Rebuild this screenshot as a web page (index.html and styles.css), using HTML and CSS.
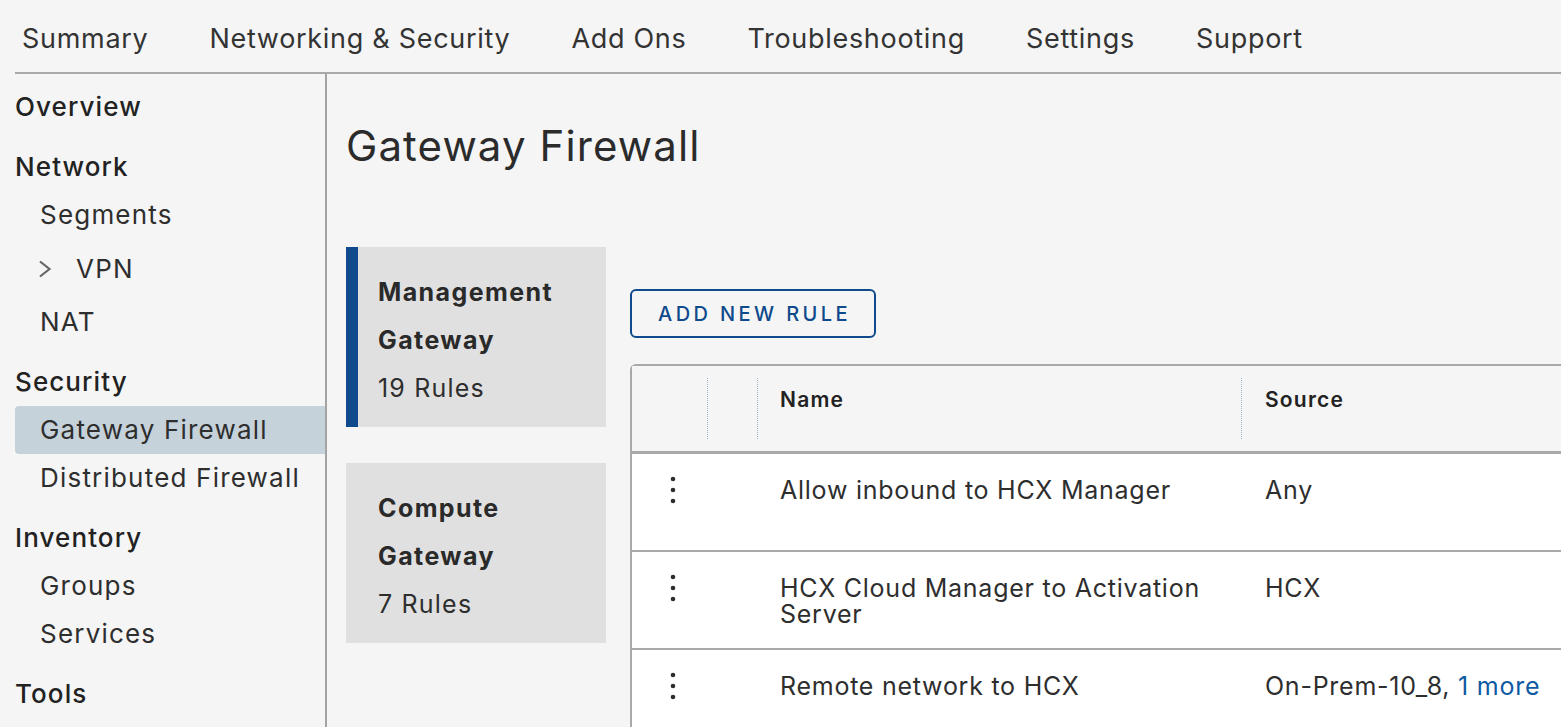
FILE: index.html
```html
<!DOCTYPE html>
<html lang="en">
<head>
<meta charset="utf-8">
<title>Gateway Firewall</title>
<link rel="stylesheet" href="styles.css">
</head>
<body>
<header class="topnav">
  <a class="topnav-item">Summary</a>
  <a class="topnav-item">Networking &amp; Security</a>
  <a class="topnav-item">Add Ons</a>
  <a class="topnav-item">Troubleshooting</a>
  <a class="topnav-item">Settings</a>
  <a class="topnav-item">Support</a>
</header>
<div class="layout">
  <nav class="sidebar">
    <div class="nav-head first">Overview</div>
    <div class="nav-head">Network</div>
    <div class="nav-item">Segments</div>
    <div class="nav-item nav-group">
      <svg class="chev" width="14" height="18" viewBox="0 0 14 18"><path d="M2 1.5 L11.5 9 L2 16.5" fill="none" stroke="#666" stroke-width="2.2"/></svg>
      <span>VPN</span>
    </div>
    <div class="nav-item">NAT</div>
    <div class="nav-head">Security</div>
    <div class="nav-item active">Gateway Firewall</div>
    <div class="nav-item">Distributed Firewall</div>
    <div class="nav-head">Inventory</div>
    <div class="nav-item">Groups</div>
    <div class="nav-item">Services</div>
    <div class="nav-head">Tools</div>
  </nav>
  <main class="main">
    <h1 class="title">Gateway Firewall</h1>
    <div class="content">
      <div class="gateways">
        <div class="gw-card selected">
          <div class="gw-name">Management</div>
          <div class="gw-name">Gateway</div>
          <div class="gw-count">19 Rules</div>
        </div>
        <div class="gw-card">
          <div class="gw-name">Compute</div>
          <div class="gw-name">Gateway</div>
          <div class="gw-count">7 Rules</div>
        </div>
      </div>
      <div class="rules">
        <button class="btn-outline">ADD NEW RULE</button>
        <div class="grid">
          <div class="grid-row grid-head">
            <div class="cell c-act"></div>
            <div class="cell c-sel sep"></div>
            <div class="cell c-name sep"><span>Name</span></div>
            <div class="cell c-src sep"><span>Source</span></div>
          </div>
          <div class="grid-row">
            <div class="cell c-act"><svg class="kebab" width="6" height="28" viewBox="0 0 6 28"><circle cx="3" cy="3" r="2.3"/><circle cx="3" cy="14" r="2.3"/><circle cx="3" cy="25" r="2.3"/></svg></div>
            <div class="cell c-sel"></div>
            <div class="cell c-name">Allow inbound to HCX Manager</div>
            <div class="cell c-src">Any</div>
          </div>
          <div class="grid-row">
            <div class="cell c-act"><svg class="kebab" width="6" height="28" viewBox="0 0 6 28"><circle cx="3" cy="3" r="2.3"/><circle cx="3" cy="14" r="2.3"/><circle cx="3" cy="25" r="2.3"/></svg></div>
            <div class="cell c-sel"></div>
            <div class="cell c-name">HCX Cloud Manager to Activation Server</div>
            <div class="cell c-src">HCX</div>
          </div>
          <div class="grid-row">
            <div class="cell c-act"><svg class="kebab" width="6" height="28" viewBox="0 0 6 28"><circle cx="3" cy="3" r="2.3"/><circle cx="3" cy="14" r="2.3"/><circle cx="3" cy="25" r="2.3"/></svg></div>
            <div class="cell c-sel"></div>
            <div class="cell c-name">Remote network to HCX</div>
            <div class="cell c-src">On-Prem-10_8, <a class="more">1 more</a></div>
          </div>
        </div>
      </div>
    </div>
  </main>
</div>
</body>
</html>
```

FILE: styles.css
```css
* { box-sizing: border-box; }
html, body { height: 100%; }
body {
  margin: 0;
  background: #f5f5f5;
  color: #2e2e2e;
  font-family: Inter, "Open Sans", sans-serif;
  overflow: hidden;
}

.topnav {
  display: flex;
  align-items: center;
  gap: 61px;
  height: 74px;
  margin-left: 15px;
  padding-left: 7px;
  padding-top: 4px;
  border-bottom: 2px solid #a9a9a9;
}
.topnav-item {
  font-size: 27px;
  color: #333;
  letter-spacing: 0.7px;
}

.layout {
  display: flex;
  height: calc(100% - 74px);
}
.sidebar {
  width: 312px;
  margin-left: 15px;
  padding-top: 9px;
  border-right: 2px solid #a3a3a3;
  flex-shrink: 0;
}
.nav-head {
  height: 48px;
  line-height: 48px;
  margin-top: 12px;
  padding-left: 0;
  font-size: 26px;
  font-weight: 500;
  color: #222;
  letter-spacing: 1.1px;
}
.nav-head.first { margin-top: 0; }
.nav-item {
  height: 48px;
  line-height: 48px;
  padding-left: 25px;
  font-size: 26px;
  color: #2e2e2e;
  letter-spacing: 1.2px;
}
.nav-group {
  height: 59px;
  line-height: 59px;
  display: flex;
  align-items: center;
  padding-left: 23px;
  gap: 24px;
}
.chev { flex-shrink: 0; }
.nav-item.active {
  background: #c6d2da;
  border-radius: 4px 0 0 4px;
}

.main {
  flex: 1;
  padding-left: 19px;
  min-width: 0;
}
.title {
  margin: 0;
  padding-top: 46px;
  height: 173px;
  font-size: 42px;
  font-weight: 400;
  line-height: 52px;
  color: #2b2b2b;
  letter-spacing: 1.1px;
}
.content {
  display: flex;
  gap: 24px;
}
.gateways {
  display: flex;
  flex-direction: column;
  gap: 36px;
  width: 260px;
  flex-shrink: 0;
}
.gw-card {
  height: 180px;
  background: #e0e0e0;
  border-left: 12px solid #e0e0e0;
  padding: 21px 0 15px 20px;
}
.gw-card.selected { border-left-color: #0f4a8c; }
.gw-name, .gw-count {
  height: 48px;
  line-height: 48px;
  font-size: 25px;
}
.gw-name { font-weight: 700; color: #2a2a2a; letter-spacing: 1.4px; }
.gw-count { color: #2e2e2e; letter-spacing: 1.2px; }

.rules {
  flex: 1;
  padding-top: 42px;
  min-width: 0;
}
.btn-outline {
  display: block;
  width: 246px;
  height: 49px;
  border: 2px solid #0f4a8c;
  border-radius: 6px;
  background: transparent;
  color: #0f4a8c;
  font-family: inherit;
  font-size: 20px;
  font-weight: 500;
  letter-spacing: 3.4px;
  padding: 0 0 0 3px;
}
.grid {
  margin-top: 26px;
  border-left: 2px solid #a9a9a9;
  border-top: 2px solid #a9a9a9;
  border-top-left-radius: 6px;
  width: 1100px;
}
.grid-row {
  display: flex;
  background: #fff;
  border-bottom: 2px solid #a9a9a9;
  height: 98px;
}
.grid-head {
  background: #f5f5f5;
  height: 88px;
  border-bottom-width: 3px;
}
.cell {
  position: relative;
  padding-top: 23px;
  font-size: 25px;
  line-height: 26px;
  color: #2e2e2e;
  letter-spacing: 0.75px;
}
.grid-head .cell {
  padding-top: 21px;
  font-size: 21px;
  font-weight: 600;
  color: #222;
  letter-spacing: 1.2px;
}
.grid-head .sep::before {
  content: "";
  position: absolute;
  left: 0;
  top: 12px;
  bottom: 12px;
  border-left: 1px dotted #9fb4c4;
}
.c-act { width: 75px; display: flex; justify-content: center; padding-top: 22px; padding-left: 6px; }
.c-sel { width: 50px; }
.c-name { width: 484px; padding-left: 23px; padding-right: 24px; }
.c-src { flex: 1; padding-left: 24px; }
.kebab { fill: #2e2e2e; }
.more { color: #0f5aa3; }
```
